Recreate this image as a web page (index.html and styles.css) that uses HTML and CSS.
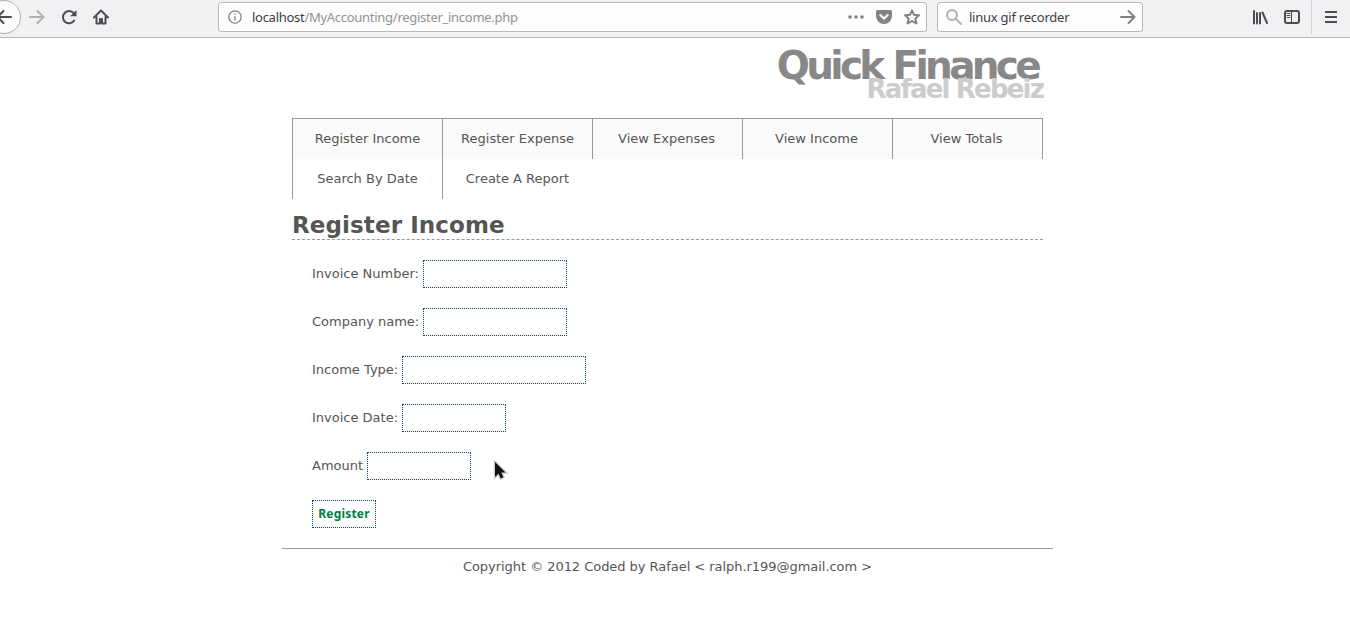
FILE: index.html
```html
<!DOCTYPE html>
<html lang="en">
<head>
<meta charset="utf-8">
<title>Quick Finance</title>
<link rel="stylesheet" href="styles.css">
</head>
<body>
<div class="toolbar">
  <div class="nav-buttons">
    <span class="back"><svg width="16" height="16" viewBox="0 0 16 16" class="stroke dark"><path d="M15 8H1.500M7.500 2L1.500 8l6 6"/></svg></span>
    <svg width="16" height="16" viewBox="0 0 16 16" class="stroke faded forward"><path d="M1 8h13.500M8.500 2l6 6-6 6"/></svg>
    <svg width="16" height="16" viewBox="0 0 16 16" class="stroke dark reload"><path d="M12.700 4.200A6.100 6.100 0 1 0 13.200 11.500"/><path class="solid" d="M15.500 1v6.300H9.200z"/></svg>
    <svg width="16" height="16" viewBox="0 0 16 16" class="stroke dark home"><path d="M1 8.500L8 1.500l7 7M3.500 8v6.500h3.500V10h2v4.500h3.500V8"/></svg>
  </div>
  <div class="urlbar">
    <svg width="14" height="14" viewBox="0 0 14 14" class="info"><circle cx="7" cy="7" r="6.200"/><path d="M7 6.200v4.300M7 3.200v1.600"/></svg>
    <span class="url"><b>localhost</b>/MyAccounting/register_income.php</span>
    <svg width="16" height="16" viewBox="0 0 16 16" class="fill"><circle cx="2" cy="8" r="1.800"/><circle cx="8" cy="8" r="1.800"/><circle cx="14" cy="8" r="1.800"/></svg>
    <svg width="16" height="16" viewBox="0 0 16 16" class="fill pocket"><path d="M1.500 1h13A1.500 1.500 0 0 1 16 2.500V7A8 8 0 0 1 0 7V2.500A1.500 1.500 0 0 1 1.500 1z"/><path class="check" d="M4.300 6L8 9.500 11.700 6"/></svg>
    <svg width="16" height="16" viewBox="0 0 16 16" class="stroke gray star"><path d="M8 1.300l2 4.500 5 .5-3.700 3.300 1.100 4.900L8 12l-4.400 2.500 1.100-4.900L1 6.300l5-.5z"/></svg>
  </div>
  <div class="search">
    <svg width="16" height="16" viewBox="0 0 16 16" class="stroke faded"><circle cx="6" cy="6" r="4.900"/><path d="M9.600 9.600L15 15"/></svg>
    <span class="query">linux gif recorder</span>
    <svg width="16" height="16" viewBox="0 0 16 16" class="stroke gray"><path d="M1 8h13.500M8.500 2l6 6-6 6"/></svg>
  </div>
  <div class="tools">
    <svg width="16" height="16" viewBox="0 0 16 16" class="stroke dark"><path d="M2 2v12.500M5 4v10.500M8 4v10.500M10.500 3.500L15 14"/></svg>
    <svg width="16" height="16" viewBox="0 0 16 16" class="stroke dark"><rect x="1" y="2" width="14" height="12" rx="2"/><path class="thin" d="M7.500 2v12M3 4.500h3M3 6.500h3M3 8.500h3"/></svg>
  </div>
  <div class="menu"><svg width="12" height="12" viewBox="0 0 12 12" class="stroke dark"><path d="M0 1h12M0 6h12M0 11h12"/></svg></div>
</div>

<div class="page">
  <header class="brand">
    <div class="title">Quick Finance</div>
    <div class="author">Rafael Rebeiz</div>
  </header>
  <nav class="tabs">
    <a class="tab">Register Income</a>
    <a class="tab">Register Expense</a>
    <a class="tab view">View Expenses</a>
    <a class="tab view">View Income</a>
    <a class="tab view last">View Totals</a>
    <a class="tab plain">Search By Date</a>
    <a class="tab plain">Create A Report</a>
  </nav>
  <h1>Register Income</h1>
  <form class="form">
    <label class="row"><span>Invoice Number:</span><input class="field medium" type="text"></label>
    <label class="row"><span>Company name:</span><input class="field medium" type="text"></label>
    <label class="row"><span>Income Type:</span><input class="field wide" type="text"></label>
    <label class="row"><span>Invoice Date:</span><input class="field short" type="text"></label>
    <label class="row"><span>Amount</span><input class="field short" type="text"></label>
    <button class="submit" type="button">Register</button>
  </form>
  <footer>Copyright © 2012 Coded by Rafael &lt; ralph.r199@gmail.com &gt;</footer>
</div>
<svg class="cursor" width="16" height="22" viewBox="0 0 16 22"><path class="halo" d="M2 2v15l3.500-3.400 2.300 4.800 2.600-1.200-2.200-4.800H12.500z"/><path d="M2 2v15l3.500-3.400 2.300 4.800 2.600-1.200-2.200-4.800H12.500z"/></svg>
</body>
</html>
```
FILE: styles.css
```css
body {
  margin: 0;
  height: 636px;
  overflow: hidden;
  background: #fff;
  color: #555;
  font: 13px "DejaVu Sans", sans-serif;
}
svg { display: block; flex: none; }

.toolbar {
  display: flex;
  box-sizing: border-box;
  height: 38px;
  background: #f0f1f3;
  border-bottom: 1px solid #b9b9ba;
  font-family: "Noto Sans", sans-serif;
}
.nav-buttons {
  display: flex;
  align-items: center;
  width: 218px;
  height: 34px;
}
.back {
  display: flex;
  align-items: center;
  justify-content: flex-end;
  box-sizing: border-box;
  width: 34px;
  height: 34px;
  margin-left: -13px;
  padding-right: 8px;
  border: 1px solid #b0b0b1;
  border-radius: 50%;
  background: #fcfcfc;
}
.forward { margin-left: 8px; }
.reload { margin-left: 16px; }
.home { margin-left: 16px; }

.stroke { fill: none; stroke-width: 2; stroke-linecap: round; stroke-linejoin: round; }
.dark { stroke: #4b4d52; }
.gray { stroke: #7d8084; }
.faded { stroke: #b0b1b3; }
.solid { fill: #4b4d52; stroke: none; }
.thin { stroke-width: 1; }
.fill { fill: #808388; }
.check { fill: none; stroke: #fcfcfc; stroke-width: 2; stroke-linecap: round; }
.info { fill: none; stroke: #808080; stroke-width: 1.3; }

.urlbar, .search {
  display: flex;
  align-items: center;
  box-sizing: border-box;
  height: 30px;
  margin-top: 2px;
  border: 1px solid #b9b9ba;
  border-radius: 3px;
  background: #fdfdfd;
}
.urlbar { width: 709px; padding: 0 6px 0 9px; gap: 12px; }
.url { flex: 1; margin-left: -2px; color: #929292; letter-spacing: -0.28px; }
.url b { color: #393f45; font-weight: 400; }
.search { width: 206px; margin-left: 10px; padding: 0 6px 0 8px; }
.query { flex: 1; margin-left: 7px; color: #393f45; letter-spacing: -0.24px; }
.tools {
  display: flex;
  align-items: center;
  gap: 16px;
  height: 34px;
  margin-left: 109px;
}
.menu {
  display: flex;
  align-items: center;
  height: 34px;
  margin-left: 11px;
  padding-left: 13px;
  border-left: 1px solid #d2d3d5;
}

.page { width: 771px; margin-left: 282px; }
.brand {
  height: 80px;
  box-sizing: border-box;
  padding-top: 3px;
  text-align: right;
  font-weight: 700;
}
.title {
  height: 36px;
  padding-right: 15px;
  color: #888;
  font-size: 39px;
  line-height: 49px;
  letter-spacing: -3.7px;
  word-spacing: 1px;
}
.author {
  padding-right: 10px;
  color: #ccc;
  font-size: 26px;
  line-height: 24px;
  letter-spacing: -1.8px;
}
.tabs {
  display: flex;
  flex-wrap: wrap;
  width: 751px;
  margin-left: 10px;
}
.tab {
  box-sizing: border-box;
  width: 150px;
  height: 41px;
  border-top: 1px solid #999;
  border-left: 1px solid #999;
  background: #fafafa;
  text-align: center;
  line-height: 39px;
}
.tab.view { padding-right: 2px; }
.tab.last { width: 151px; border-right: 1px solid #999; }
.tab.plain { height: 40px; border-top: 0; background: #fff; }
h1 {
  width: 751px;
  height: 40px;
  margin: 0 0 0 10px;
  border-bottom: 1px dashed #999;
  font-size: 23px;
  line-height: 52px;
  letter-spacing: 0.1px;
}
.form {
  display: flex;
  flex-direction: column;
  align-items: flex-start;
  gap: 20px;
  padding: 20px 0 20px 30px;
}
.row { display: flex; align-items: center; gap: 4px; height: 28px; line-height: 26px; }
.field, .submit {
  box-sizing: border-box;
  height: 28px;
  padding: 0 5px;
  border: 1px dotted #004080;
  background: #fff;
}
.medium { width: 144px; }
.wide { width: 184px; }
.short { width: 104px; }
.submit {
  width: 64px;
  padding-bottom: 1px;
  color: #008040;
  font: 700 12px "Noto Sans", sans-serif;
  letter-spacing: 0.2px;
}
footer {
  border-top: 1px solid #999;
  text-align: center;
  line-height: 35px;
  letter-spacing: -0.04px;
}
.cursor {
  position: absolute;
  left: 493px;
  top: 460px;
  fill: #111;
}
.halo { fill: #fff; stroke: #ccc; stroke-width: 2.5; }
```
